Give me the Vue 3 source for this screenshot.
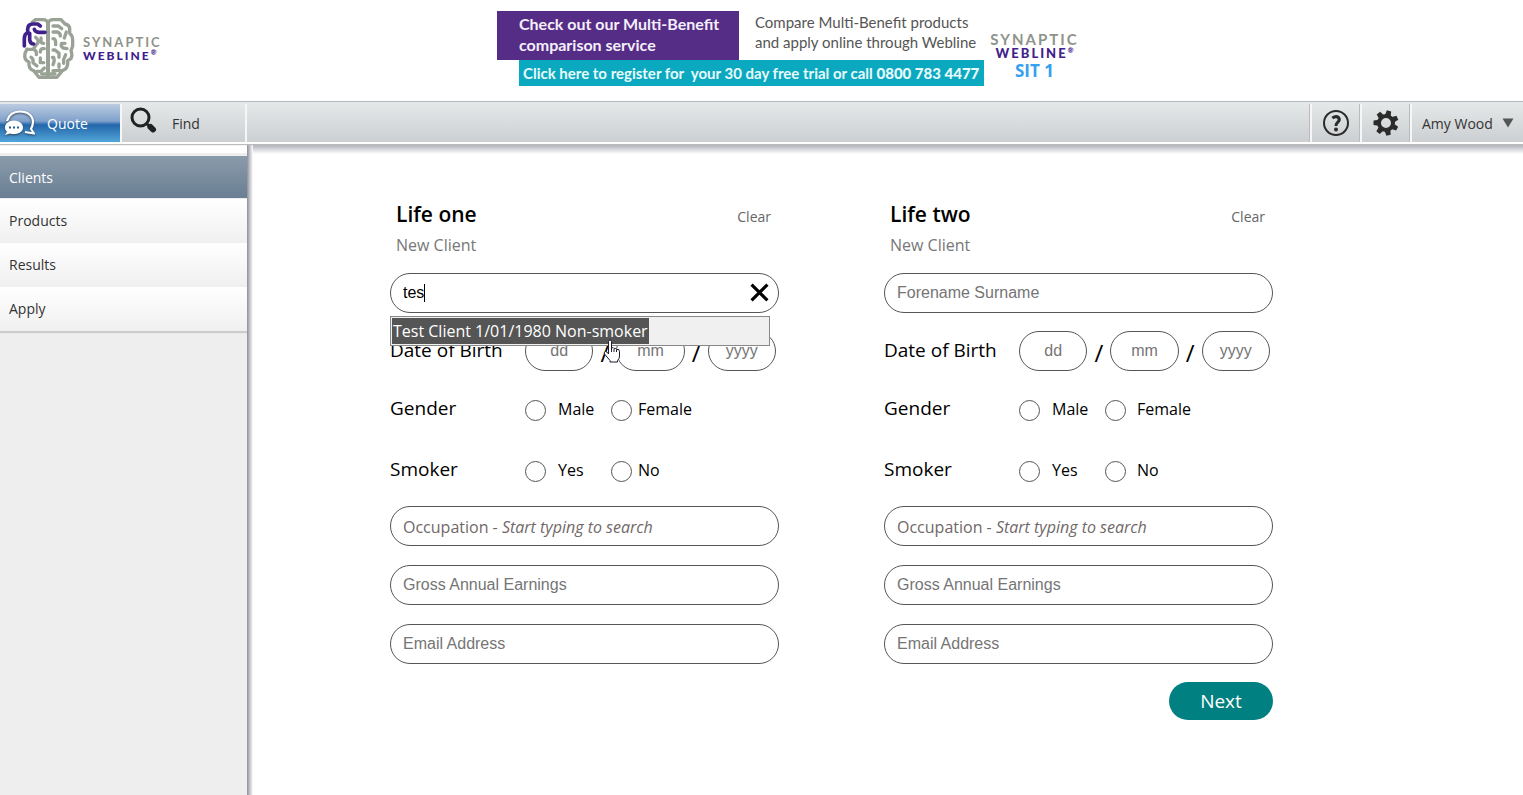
<template>
  <div class="page">
    <header class="header">
      <a href="#" class="logo" aria-label="Synaptic Webline">
        <svg class="brain" viewBox="0 0 195 225" fill="none" stroke="#9aa295" stroke-width="10" stroke-linecap="round" stroke-linejoin="round">
          <path d="M99 36V196" stroke-width="12" />
          <path d="M62 29H84Q96 29 99 40Q102 29 114 29H138L150 42Q164 44 164 58V70Q173 76 173 90V108L168 122Q173 134 168 146L158 152Q160 170 150 178L142 182L126 202H72L56 182Q40 178 42 156Q26 150 30 130L36 118" />
          <path d="M62 29L52 36M78 84V94Q78 100 86 100M62 82Q76 94 64 104L54 118M36 118L54 118Q66 120 64 134M88 116H82Q76 118 76 126M48 142Q56 146 54 158L66 168M76 144V158H86M64 184H78L88 174" />
          <path d="M114 48H130L140 56M114 66H126Q136 68 136 78M154 66L148 84M114 86Q122 86 122 98V104M150 100H140Q136 108 144 114L156 116M114 120H120L132 130V142M112 142H116Q120 154 114 164M152 134L146 148V160M132 162V172M114 182H138M80 192H120" />
          <path d="M28 108V86Q28 72 38 68V58Q38 42 54 42H68L76 48M90 67H72Q60 66 58 58M44 70V90Q46 102 56 102" stroke="#41208b" stroke-width="11" />
        </svg>
        <span class="wordmark">
          <span class="synaptic">SYNAPTIC</span>
          <span class="webline">WEBLINE<sup>®</sup></span>
        </span>
      </a>

      <a href="#" class="banner">
        <span class="promo">
          <span class="promo-top">
            <span class="promo-title">Check out our Multi-Benefit<br />comparison service</span>
            <span class="promo-text">Compare Multi-Benefit products<br />and apply online through Webline</span>
          </span>
          <span class="promo-bar">Click here to register for&nbsp; your 30 day free trial or call <b>0800 783 4477</b></span>
        </span>
        <span class="promo-brand">
          <span class="synaptic">SYNAPTIC</span>
          <span class="webline">WEBLINE<sup>®</sup></span>
          <span class="sit">SIT 1</span>
        </span>
      </a>
    </header>

    <nav class="toolbar">
      <button class="tab quote" type="button">
        <svg class="bubbles" viewBox="0 0 32 28">
          <path d="M3 12C5 5 10 2.500 16 2.500C24 2.500 29 7 29 13C29 16 28 18 27 20L30 24.500L21 23" fill="none" stroke="#fff" stroke-width="2.200" stroke-linejoin="round" />
          <path d="M10 11.500C15 11.500 19 14.500 19 18.500S15 25 10 25C8.500 25 7 25 6 24.500L1 26L3 22.500C1.500 21.500 1 20 1 18.500C1 14.500 5 11.500 10 11.500Z" fill="#fff" />
          <path d="M5 18.500h2M9 18.500h2M13 18.500h2" stroke="#2a5c9c" stroke-width="2" />
        </svg>
        Quote
      </button>
      <button class="tab find" type="button">
        <svg class="glass" viewBox="0 0 28 28" fill="none" stroke="#222">
          <circle cx="10.500" cy="10.500" r="8.500" stroke-width="3" />
          <path d="M17 17L20 20" stroke-width="3" />
          <path d="M20.500 20L23 22.500" stroke-width="6" stroke-linecap="round" />
        </svg>
        Find
      </button>
      <button class="tool first" type="button" aria-label="Help">
        <svg viewBox="0 0 28 28" fill="none" stroke="#2b2b2b">
          <circle cx="14" cy="14" r="12" stroke-width="2" />
          <path d="M10.300 9Q14 6.500 16.500 8.500Q18.500 11 15.500 13.500Q14 14.500 14 17" stroke-width="3" />
          <circle cx="14" cy="20.500" r="2" fill="#2b2b2b" stroke="none" />
        </svg>
      </button>
      <button class="tool" type="button" aria-label="Settings">
        <svg viewBox="0 0 28 28">
          <circle cx="14" cy="14" r="7" fill="none" stroke="#2b2b2b" stroke-width="4" />
          <path v-for="n in 7" :key="n" d="M11 7L11.800 1.500H16.200L17 7Z" fill="#2b2b2b" :transform="`rotate(${14 + n * 360 / 7} 14 14)`" />
        </svg>
      </button>
      <button class="user" type="button">
        Amy Wood
        <svg class="arrow" viewBox="0 0 12 10"><path d="M0.500 0.500H11.500L6 9.500Z" fill="#555" /></svg>
      </button>
    </nav>

    <div class="body">
      <aside class="sidebar">
        <a
          v-for="item in menu"
          :key="item"
          href="#"
          class="menu-item"
          :class="{ active: item === 'Clients' }"
        >{{ item }}</a>
      </aside>

      <main class="main">
        <form class="form" @submit.prevent>
          <section v-for="life in lives" :key="life.id" class="life" :class="life.id">
            <div class="life-head">
              <h2>{{ life.title }}</h2>
              <button class="clear" type="button" @click="life.name = ''">Clear</button>
            </div>
            <p class="status">New Client</p>

            <div class="name-field">
              <input v-model="life.name" class="pill" type="text" placeholder="Forename Surname" aria-label="Forename Surname" />
              <template v-if="life.name">
                <span class="caret"></span>
                <button class="reset" type="button" aria-label="Clear name" @click="life.name = ''">
                  <svg viewBox="0 0 18 18"><path d="M1.500 1.500L16.500 16.500M16.500 1.500L1.500 16.500" stroke="#000" stroke-width="3" /></svg>
                </button>
                <div class="suggestions">
                  <button type="button">Test Client 1/01/1980 Non-smoker</button>
                  <svg class="pointer" viewBox="0 0 18 24">
                    <path d="M5.500 2.500Q5.500 1 7 1T8.500 2.500V9Q10.500 8 11 9.500Q13 8.500 13.500 10.500Q16.500 9.500 16.500 12.500V17Q16.500 20 14.500 21.500V23H7V21.500L1.500 15Q0.500 13 2.500 12.500Q4 12.500 5.500 15Z" fill="#fff" stroke="#1b1b2b" stroke-width="1" stroke-linejoin="round" />
                    <path d="M8.500 9V13M11 10V13M13.500 11V13" stroke="#1b1b2b" />
                  </svg>
                </div>
              </template>
            </div>

            <div class="row dob">
              <span class="label">Date of Birth</span>
              <div class="date">
                <input class="pill" type="text" placeholder="dd" aria-label="Day of birth" />
                <span>/</span>
                <input class="pill" type="text" placeholder="mm" aria-label="Month of birth" />
                <span>/</span>
                <input class="pill" type="text" placeholder="yyyy" aria-label="Year of birth" />
              </div>
            </div>

            <div v-for="question in questions" :key="question.label" class="row choice">
              <span class="label">{{ question.label }}</span>
              <label v-for="option in question.options" :key="option" class="option">
                <input type="radio" :name="life.id + question.label" :value="option" />
                <span>{{ option }}</span>
              </label>
            </div>

            <label class="pill occupation">
              <span>Occupation - <em>Start typing to search</em></span>
              <input type="text" />
            </label>
            <input class="pill" type="text" placeholder="Gross Annual Earnings" aria-label="Gross Annual Earnings" />
            <input class="pill" type="text" placeholder="Email Address" aria-label="Email Address" />
          </section>

          <button class="next" type="submit">Next</button>
        </form>
      </main>
    </div>
  </div>
</template>

<script setup>
import { ref } from 'vue'

const menu = ['Clients', 'Products', 'Results', 'Apply']

const lives = ref([
  { id: 'one', title: 'Life one', name: 'tes' },
  { id: 'two', title: 'Life two', name: '' }
])

const questions = [
  { label: 'Gender', options: ['Male', 'Female'] },
  { label: 'Smoker', options: ['Yes', 'No'] }
]
</script>

<style>
body {
  margin: 0;
}
</style>

<style scoped>
* {
  box-sizing: border-box;
}

.page {
  min-height: 100vh;
  display: flex;
  flex-direction: column;
  font-family: 'Open Sans', 'Noto Sans', sans-serif;
  background: #fff;
  color: #000;
}

button,
input {
  font-family: inherit;
  margin: 0;
}

button {
  border: 0;
  padding: 0;
  background: none;
  cursor: pointer;
}

a {
  text-decoration: none;
}

/* header */
.header {
  height: 101px;
  display: flex;
  align-items: flex-start;
  padding: 10px 15px;
}

.logo {
  display: flex;
  align-items: center;
  width: 482px;
}

.brain {
  width: 65px;
  height: 75px;
}

.wordmark {
  display: flex;
  flex-direction: column;
  padding: 2px 0 0 3px;
}

.synaptic,
.webline {
  font-family: Lato, sans-serif;
  font-size: 13px;
  line-height: 13px;
  letter-spacing: 2px;
  white-space: nowrap;
}

.synaptic {
  color: #8e9389;
  font-weight: 700;
}

.webline {
  color: #41208b;
  font-size: 12px;
  font-weight: 900;
}

.webline sup {
  font-size: 7px;
  line-height: 0;
  letter-spacing: 0;
}

.banner {
  display: flex;
  padding-top: 1px;
  font-family: Lato, sans-serif;
  white-space: nowrap;
}

.promo {
  display: flex;
  flex-direction: column;
}

.promo-top {
  display: flex;
}

.promo-title {
  width: 242px;
  height: 49px;
  padding: 2px 0 0 22px;
  background: #552d86;
  color: #f4effa;
  font-size: 16px;
  font-weight: 700;
  line-height: 21px;
}

.promo-text {
  padding: 1px 0 0 16px;
  color: #555;
  font-size: 15px;
  line-height: 20px;
}

.promo-bar {
  height: 26px;
  margin-left: 22px;
  padding: 0 5px 0 4px;
  background: #0aa9c0;
  color: #e8fafc;
  font-size: 15px;
  font-weight: 700;
  line-height: 26px;
}

.promo-brand {
  display: flex;
  flex-direction: column;
  align-items: center;
  padding: 21px 0 0 6px;
}

.promo-brand .synaptic {
  font-size: 15px;
  line-height: 15px;
}

.promo-brand .webline {
  font-size: 13px;
}

.sit {
  color: #34a0f0;
  font-family: 'Open Sans', sans-serif;
  font-size: 17px;
  font-weight: 700;
  line-height: 22px;
}

/* toolbar */
.toolbar {
  position: relative;
  z-index: 1;
  display: flex;
  height: 43px;
  padding-top: 2px;
  border-top: 1px solid #b5b8ba;
  border-bottom: 2px solid #fff;
  background: linear-gradient(#e6e9ea, #cccfd1);
  box-shadow: 0 1px 1px #bbb;
}

.tab {
  display: flex;
  align-items: center;
  border-right: 2px solid #f6f6f6;
  color: #333;
  font-size: 14px;
}

.quote {
  width: 122px;
  gap: 11px;
  padding-left: 4px;
  background: linear-gradient(#bccbe0 0%, #7fa1cb 45%, #2367ab 55%, #52a5d9 100%);
  color: #fff;
}

.bubbles {
  width: 32px;
  height: 28px;
  filter: drop-shadow(0 1px 1px #345);
}

.find {
  width: 125px;
  gap: 14px;
  padding-left: 8px;
}

.glass {
  width: 28px;
  height: 28px;
  margin-bottom: 4px;
}

.tool {
  display: flex;
  align-items: center;
  justify-content: center;
  width: 50px;
  border-left: 2px solid #f6f6f6;
  box-shadow: -1px 0 #bbb;
}

.tool.first {
  margin-left: auto;
}

.tool svg {
  width: 28px;
  height: 28px;
}

.user {
  display: flex;
  align-items: center;
  gap: 9px;
  width: 113px;
  padding-left: 10px;
  border-left: 2px solid #f6f6f6;
  box-shadow: -1px 0 #bbb;
  color: #333;
  font-size: 14px;
  white-space: nowrap;
}

.arrow {
  width: 12px;
  height: 10px;
}

/* body */
.body {
  flex: 1;
  display: flex;
}

.sidebar {
  width: 247px;
  flex: none;
  border-top: 9px solid #fff;
  padding-top: 3px;
  background: #eee;
}

.menu-item {
  display: flex;
  align-items: center;
  height: 44px;
  padding-left: 9px;
  border-bottom: 1px solid #eee;
  background: linear-gradient(#fff, #f0f0f0);
  color: #333;
  font-size: 14px;
}

.menu-item.active {
  height: 43px;
  background: linear-gradient(#8a9bab, #6a7f93);
  color: #fff;
}

.menu-item:last-child {
  box-shadow: 0 2px 1px #ccc;
}

.main {
  flex: 1;
  min-width: 0;
  padding: 55px 0 70px 143px;
  background:
    linear-gradient(to right, #8f8f9c, #fff) left top / 6px 100% no-repeat,
    linear-gradient(#a9a9b6, #fff) left top / 100% 10px no-repeat;
}

.form {
  display: grid;
  grid-template-columns: repeat(2, minmax(0, 1fr));
  column-gap: 105px;
  width: 100%;
  max-width: 883px;
}

.life {
  display: flex;
  flex-direction: column;
}

.life-head {
  display: flex;
  align-items: center;
  justify-content: space-between;
  height: 30px;
  padding: 0 8px 0 6px;
}

h2 {
  margin: 0;
  font-size: 21px;
  font-weight: 600;
  line-height: 30px;
}

.clear {
  padding-top: 4px;
  color: #666;
  font-size: 14px;
}

.status {
  margin: 0 0 15px;
  padding: 3px 0 0 6px;
  color: #777;
  font-size: 16px;
  line-height: 26px;
}

.pill {
  width: 100%;
  height: 40px;
  padding: 0 12px;
  border: 1px solid #555;
  border-radius: 20px;
  outline: 0;
  background: #fff;
  color: #000;
  font-family: 'Liberation Sans', Arial, sans-serif;
  font-size: 16px;
}

.pill::placeholder {
  color: #757575;
  opacity: 1;
}

.name-field {
  position: relative;
}

.name-field .pill {
  display: block;
}

.caret {
  position: absolute;
  top: 11px;
  left: 34px;
  width: 1px;
  height: 18px;
  background: #000;
}

.reset {
  position: absolute;
  top: 10px;
  right: 10px;
  display: flex;
}

.reset svg {
  width: 19px;
  height: 19px;
}

.suggestions {
  position: absolute;
  z-index: 2;
  top: 43px;
  left: 0;
  right: 9px;
  height: 30px;
  padding: 1px;
  border: 1px solid #888;
  background: #f0f0f0;
}

.suggestions button {
  height: 26px;
  padding: 0 1px;
  background: #555;
  color: #fff;
  font-size: 16px;
  line-height: 26px;
  white-space: nowrap;
}

.pointer {
  position: absolute;
  top: 22px;
  left: 212px;
  width: 18px;
  height: 24px;
}

.row {
  display: flex;
  align-items: center;
}

.label {
  width: 135px;
  flex: none;
  font-size: 19px;
  padding-bottom: 2px;
}

.dob {
  height: 40px;
  margin: 18px 0 9px;
}

.date {
  flex: 1;
  display: flex;
  align-items: center;
  max-width: 251px;
}

.date .pill {
  flex: 1;
  min-width: 0;
  padding: 0;
  text-align: center;
}

.date span {
  width: 23px;
  padding-top: 4px;
  font-size: 24px;
  line-height: 30px;
  text-align: center;
}

.choice {
  height: 61px;
}

.choice .label {
  padding-bottom: 5px;
}

.option {
  display: flex;
  align-items: center;
  gap: 12px;
  width: 86px;
  font-size: 16px;
}

.option span {
  padding-bottom: 4px;
}

.one .option:last-child {
  gap: 6px;
}

.two .option:last-child {
  gap: 11px;
}

.option input {
  appearance: none;
  width: 21px;
  height: 21px;
  flex: none;
  border: 1px solid #555;
  border-radius: 50%;
  background: #fff;
}

.option input:checked {
  box-shadow: inset 0 0 0 4px #fff;
  background: #008080;
}

.occupation {
  display: flex;
  align-items: center;
  margin-top: 4px;
  padding-top: 2px;
  color: #706868;
  font-family: inherit;
  white-space: nowrap;
}

.occupation input {
  flex: 1;
  min-width: 0;
  border: 0;
  outline: 0;
  background: none;
  font-size: 16px;
}

.life > .pill + .pill {
  margin-top: 19px;
}

.next {
  grid-column: 2;
  justify-self: end;
  width: 104px;
  height: 38px;
  margin-top: 18px;
  border-radius: 19px;
  background: #008080;
  color: #fff;
  font-size: 19px;
}
</style>
